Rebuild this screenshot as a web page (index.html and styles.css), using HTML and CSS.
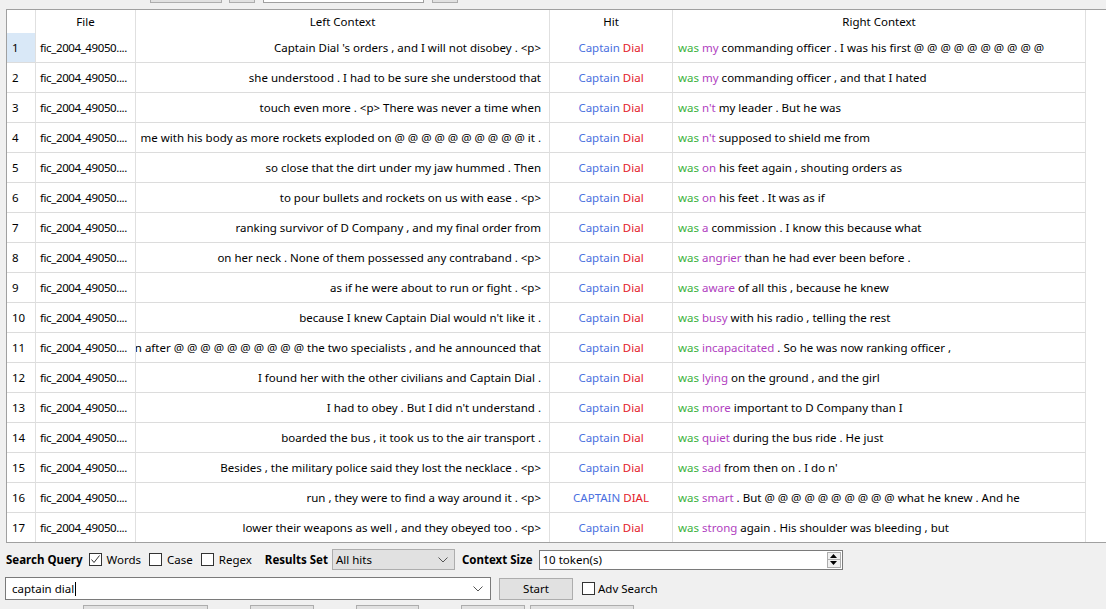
FILE: index.html
```html
<!DOCTYPE html>
<html>
<head>
<meta charset="utf-8">
<link rel="stylesheet" href="styles.css">
</head>
<body>
<div class="topstrip">
  <div class="tbtn t1"></div>
  <div class="tbtn t2"></div>
  <div class="tinput t3"></div>
  <div class="tbtn t4"></div>
</div>

<div class="grid">
  <div class="hc"></div><div class="hc">File</div><div class="hc">Left Context</div><div class="hc">Hit</div><div class="hc">Right Context</div><div class="fill"></div>

  <div class="c num sel">1</div><div class="c file"><span>fic_2004_49050....</span></div><div class="c left"><span>Captain Dial 's orders , and I will not disobey . &lt;p&gt;</span></div><div class="c hit"><span><span class="b">Captain</span> <span class="r">Dial</span></span></div><div class="c right"><span><span class="g">was</span> <span class="p">my</span> commanding officer . I was his first @ @ @ @ @ @ @ @ @ @</span></div><div class="fill"></div>

  <div class="c num">2</div><div class="c file"><span>fic_2004_49050....</span></div><div class="c left"><span>she understood . I had to be sure she understood that</span></div><div class="c hit"><span><span class="b">Captain</span> <span class="r">Dial</span></span></div><div class="c right"><span><span class="g">was</span> <span class="p">my</span> commanding officer , and that I hated</span></div><div class="fill"></div>

  <div class="c num">3</div><div class="c file"><span>fic_2004_49050....</span></div><div class="c left"><span>touch even more . &lt;p&gt; There was never a time when</span></div><div class="c hit"><span><span class="b">Captain</span> <span class="r">Dial</span></span></div><div class="c right"><span><span class="g">was</span> <span class="p">n't</span> my leader . But he was</span></div><div class="fill"></div>

  <div class="c num">4</div><div class="c file"><span>fic_2004_49050....</span></div><div class="c left"><span>me with his body as more rockets exploded on @ @ @ @ @ @ @ @ @ @ it .</span></div><div class="c hit"><span><span class="b">Captain</span> <span class="r">Dial</span></span></div><div class="c right"><span><span class="g">was</span> <span class="p">n't</span> supposed to shield me from</span></div><div class="fill"></div>

  <div class="c num">5</div><div class="c file"><span>fic_2004_49050....</span></div><div class="c left"><span>so close that the dirt under my jaw hummed . Then</span></div><div class="c hit"><span><span class="b">Captain</span> <span class="r">Dial</span></span></div><div class="c right"><span><span class="g">was</span> <span class="p">on</span> his feet again , shouting orders as</span></div><div class="fill"></div>

  <div class="c num">6</div><div class="c file"><span>fic_2004_49050....</span></div><div class="c left"><span>to pour bullets and rockets on us with ease . &lt;p&gt;</span></div><div class="c hit"><span><span class="b">Captain</span> <span class="r">Dial</span></span></div><div class="c right"><span><span class="g">was</span> <span class="p">on</span> his feet . It was as if</span></div><div class="fill"></div>

  <div class="c num">7</div><div class="c file"><span>fic_2004_49050....</span></div><div class="c left"><span>ranking survivor of D Company , and my final order from</span></div><div class="c hit"><span><span class="b">Captain</span> <span class="r">Dial</span></span></div><div class="c right"><span><span class="g">was</span> <span class="p">a</span> commission . I know this because what</span></div><div class="fill"></div>

  <div class="c num">8</div><div class="c file"><span>fic_2004_49050....</span></div><div class="c left"><span>on her neck . None of them possessed any contraband . &lt;p&gt;</span></div><div class="c hit"><span><span class="b">Captain</span> <span class="r">Dial</span></span></div><div class="c right"><span><span class="g">was</span> <span class="p">angrier</span> than he had ever been before .</span></div><div class="fill"></div>

  <div class="c num">9</div><div class="c file"><span>fic_2004_49050....</span></div><div class="c left"><span>as if he were about to run or fight . &lt;p&gt;</span></div><div class="c hit"><span><span class="b">Captain</span> <span class="r">Dial</span></span></div><div class="c right"><span><span class="g">was</span> <span class="p">aware</span> of all this , because he knew</span></div><div class="fill"></div>

  <div class="c num">10</div><div class="c file"><span>fic_2004_49050....</span></div><div class="c left"><span>because I knew Captain Dial would n't like it .</span></div><div class="c hit"><span><span class="b">Captain</span> <span class="r">Dial</span></span></div><div class="c right"><span><span class="g">was</span> <span class="p">busy</span> with his radio , telling the rest</span></div><div class="fill"></div>

  <div class="c num">11</div><div class="c file"><span>fic_2004_49050....</span></div><div class="c left"><span>soon after @ @ @ @ @ @ @ @ @ @ the two specialists , and he announced that</span></div><div class="c hit"><span><span class="b">Captain</span> <span class="r">Dial</span></span></div><div class="c right"><span><span class="g">was</span> <span class="p">incapacitated</span> . So he was now ranking officer ,</span></div><div class="fill"></div>

  <div class="c num">12</div><div class="c file"><span>fic_2004_49050....</span></div><div class="c left"><span>I found her with the other civilians and Captain Dial .</span></div><div class="c hit"><span><span class="b">Captain</span> <span class="r">Dial</span></span></div><div class="c right"><span><span class="g">was</span> <span class="p">lying</span> on the ground , and the girl</span></div><div class="fill"></div>

  <div class="c num">13</div><div class="c file"><span>fic_2004_49050....</span></div><div class="c left"><span>I had to obey . But I did n't understand .</span></div><div class="c hit"><span><span class="b">Captain</span> <span class="r">Dial</span></span></div><div class="c right"><span><span class="g">was</span> <span class="p">more</span> important to D Company than I</span></div><div class="fill"></div>

  <div class="c num">14</div><div class="c file"><span>fic_2004_49050....</span></div><div class="c left"><span>boarded the bus , it took us to the air transport .</span></div><div class="c hit"><span><span class="b">Captain</span> <span class="r">Dial</span></span></div><div class="c right"><span><span class="g">was</span> <span class="p">quiet</span> during the bus ride . He just</span></div><div class="fill"></div>

  <div class="c num">15</div><div class="c file"><span>fic_2004_49050....</span></div><div class="c left"><span>Besides , the military police said they lost the necklace . &lt;p&gt;</span></div><div class="c hit"><span><span class="b">Captain</span> <span class="r">Dial</span></span></div><div class="c right"><span><span class="g">was</span> <span class="p">sad</span> from then on . I do n'</span></div><div class="fill"></div>

  <div class="c num">16</div><div class="c file"><span>fic_2004_49050....</span></div><div class="c left"><span>run , they were to find a way around it . &lt;p&gt;</span></div><div class="c hit"><span><span class="b">CAPTAIN</span> <span class="r">DIAL</span></span></div><div class="c right"><span><span class="g">was</span> <span class="p">smart</span> . But @ @ @ @ @ @ @ @ @ @ what he knew . And he</span></div><div class="fill"></div>

  <div class="c num last">17</div><div class="c file last"><span>fic_2004_49050....</span></div><div class="c left last"><span>lower their weapons as well , and they obeyed too . &lt;p&gt;</span></div><div class="c hit last"><span><span class="b">Captain</span> <span class="r">Dial</span></span></div><div class="c right last"><span><span class="g">was</span> <span class="p">strong</span> again . His shoulder was bleeding , but</span></div><div class="fill"></div>
</div>

<div class="controls">
  <div class="row1">
    <span class="lbl">Search Query</span>
    <span class="cb checked"><svg width="11" height="11" viewBox="0 0 11 11"><polyline points="1.5,5.5 4,8.5 9.5,1.5" fill="none" stroke="#333" stroke-width="1"/></svg></span>
    <span class="cbt">Words</span>
    <span class="cb"></span>
    <span class="cbt">Case</span>
    <span class="cb"></span>
    <span class="cbt">Regex</span>
    <span class="lbl rs">Results Set</span>
    <span class="select">All hits<svg class="chev" width="10" height="6" viewBox="0 0 10 6"><polyline points="0.5,0.5 5,5 9.5,0.5" fill="none" stroke="#555" stroke-width="1"/></svg></span>
    <span class="lbl cs">Context Size</span>
    <span class="spin"><span class="spintext">10 token(s)</span><span class="spinbtns"><span class="sb"><svg width="7" height="4" viewBox="0 0 7 4"><polygon points="0,4 3.5,0 7,4" fill="#000"/></svg></span><span class="sb"><svg width="7" height="4" viewBox="0 0 7 4"><polygon points="0,0 3.5,4 7,0" fill="#000"/></svg></span></span></span>
  </div>
  <div class="row2">
    <span class="query">captain dial<span class="caret"></span><svg class="chev2" width="10" height="6" viewBox="0 0 10 6"><polyline points="0.5,0.5 5,5 9.5,0.5" fill="none" stroke="#555" stroke-width="1"/></svg></span>
    <span class="btn start">Start</span>
    <span class="cb adv"></span>
    <span class="cbt">Adv Search</span>
  </div>
  <div class="row3">
    <span class="pbtn w1"></span>
    <span class="pbtn w2"></span>
    <span class="pbtn w3"></span>
    <span class="pbtn w4"></span>
    <span class="pbtn w5"></span>
  </div>
</div>
</body>
</html>
```

FILE: styles.css
```css
html, body {
  margin: 0;
  padding: 0;
  background: #f0f0f0;
  overflow: hidden;
  font-family: "Noto Sans", "Open Sans", sans-serif;
  font-size: 11.5px;
  color: #000;
}

.topstrip {
  height: 9px;
  display: flex;
  align-items: flex-end;
  overflow: hidden;
}
.tbtn, .tinput {
  height: 20px;
  box-sizing: border-box;
  margin-bottom: 6px;
  flex: none;
}
.tbtn { background: #e1e1e1; border: 1px solid #adadad; }
.tinput { background: #fff; border: 1px solid #a0a0a0; }
.t1 { margin-left: 150px; width: 72px; }
.t2 { margin-left: 7px; width: 26px; }
.t3 { margin-left: 8px; width: 161px; }
.t4 { margin-left: 8px; width: 26px; }

.grid {
  margin-left: 6px;
  display: grid;
  grid-template-columns: 29px 100px 414px 123px 413px 1fr;
  grid-template-rows: 23px repeat(16, 30px) 29px;
  border-top: 1px solid #a0a0a0;
  border-left: 1px solid #a0a0a0;
  border-bottom: 1px solid #a0a0a0;
  background: #fff;
}
.hc {
  border-right: 1px solid #e0e0e0;
  display: flex;
  align-items: center;
  justify-content: center;
  white-space: nowrap;
}
.fill { background: #fff; }
.c {
  border-right: 1px solid #e0e0e0;
  border-bottom: 1px solid #dcdcdc;
  box-sizing: border-box;
  display: flex;
  align-items: center;
  white-space: nowrap;
  overflow: hidden;
}
.c.last { border-bottom: none; }
.num { padding-left: 5px; }
.num.sel { background: #d9e8f7; }
.file { padding-left: 4px; letter-spacing: -0.4px; }
.left { justify-content: flex-end; padding-right: 8px; }
.left span { flex: none; }
.hit { justify-content: center; }
.right { padding-left: 5px; }

.b { color: #4a70e0; }
.r { color: #e3202a; }
.g { color: #3cb23c; }
.p { color: #b03ec0; }

.controls { padding-left: 6px; }
.row1 {
  margin-top: 6px;
  height: 21px;
  display: flex;
  align-items: center;
}
.lbl { font-weight: bold; }
.cb {
  width: 13px;
  height: 13px;
  box-sizing: border-box;
  border: 1px solid #333;
  background: #fff;
  display: inline-flex;
  align-items: center;
  justify-content: center;
  margin-left: 6px;
  margin-right: 5px;
  flex: none;
}
.cbt { margin-right: 2px; }
.rs { margin-left: 11px; }
.select {
  margin-left: 4px;
  width: 123px;
  height: 21px;
  box-sizing: border-box;
  background: #e1e1e1;
  border: 1px solid #adadad;
  display: flex;
  align-items: center;
  padding-left: 3px;
  position: relative;
}
.chev { position: absolute; right: 6px; top: 7px; }
.cs { margin-left: 7px; }
.spin {
  margin-left: 6px;
  width: 304px;
  height: 20px;
  box-sizing: border-box;
  background: #fff;
  border: 1px solid #7a7a7a;
  display: flex;
  align-items: center;
  justify-content: space-between;
  padding-left: 3px;
}
.spinbtns {
  display: flex;
  flex-direction: column;
  width: 14px;
  height: 16px;
  margin-right: 1px;
  border: 1px solid #adadad;
  box-sizing: border-box;
}
.sb {
  flex: 1;
  display: flex;
  align-items: center;
  justify-content: center;
  background: #f0f0f0;
}
.sb + .sb { border-top: 1px solid #adadad; }

.row2 {
  margin-top: 7px;
  height: 23px;
  display: flex;
  align-items: center;
}
.query {
  margin-left: -1px;
  width: 486px;
  height: 23px;
  box-sizing: border-box;
  background: #fff;
  border: 1px solid #7a7a7a;
  display: flex;
  align-items: center;
  padding-left: 6px;
  position: relative;
}
.caret { display: inline-block; width: 1px; height: 14px; background: #000; margin-left: 1px; }
.chev2 { position: absolute; right: 7px; top: 8px; }
.btn {
  height: 22px;
  box-sizing: border-box;
  background: #e1e1e1;
  border: 1px solid #adadad;
  display: flex;
  align-items: center;
  justify-content: center;
}
.start { margin-left: 8px; width: 74px; }
.adv { margin-left: 9px; margin-right: 3px; }

.row3 {
  margin-top: 5px;
  display: flex;
}
.pbtn {
  height: 20px;
  box-sizing: border-box;
  background: #e1e1e1;
  border: 1px solid #adadad;
  flex: none;
}
.w1 { margin-left: 77px; width: 125px; }
.w2 { margin-left: 42px; width: 64px; }
.w3 { margin-left: 42px; width: 63px; }
.w4 { margin-left: 42px; width: 64px; }
.w5 { margin-left: 5px; width: 104px; }
```
